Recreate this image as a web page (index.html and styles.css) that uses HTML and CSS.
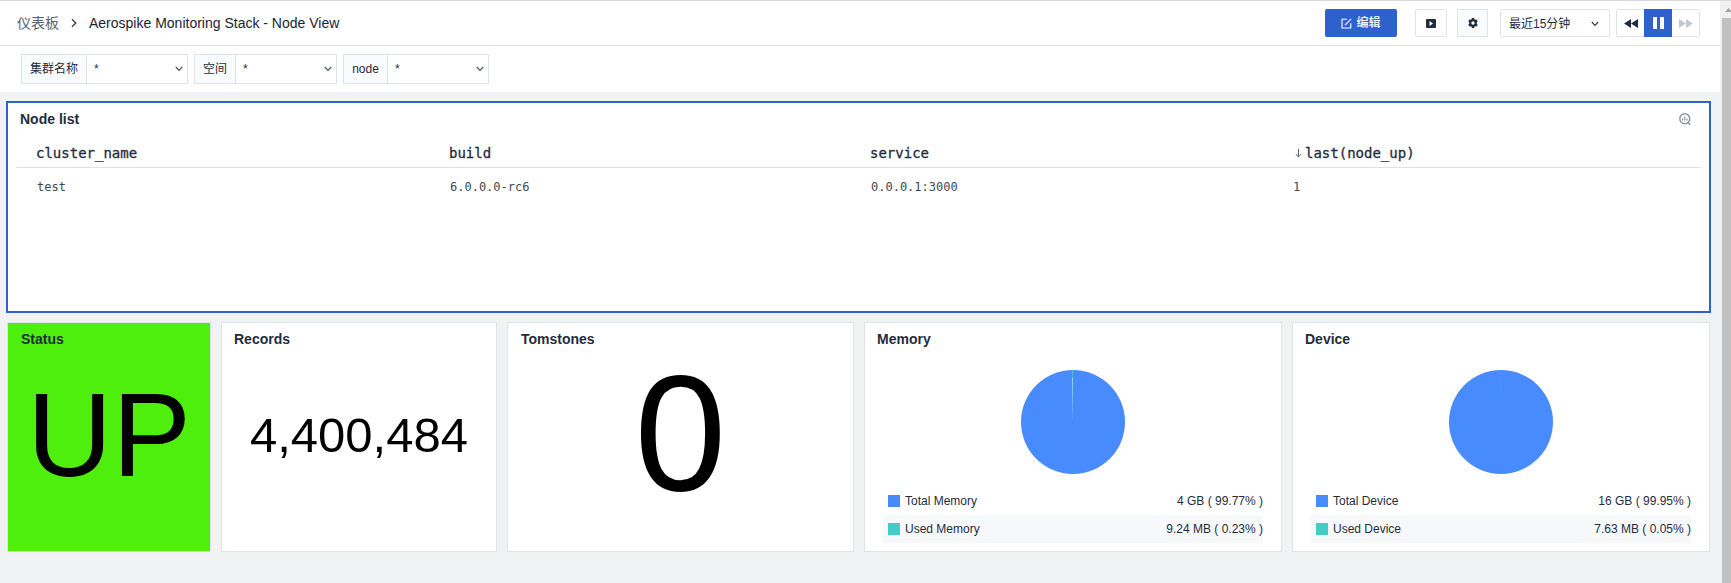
FILE: index.html
```html
<!DOCTYPE html>
<html lang="zh-CN">
<head>
<meta charset="utf-8">
<title>Aerospike Monitoring Stack - Node View</title>
<link rel="stylesheet" href="styles.css">
</head>
<body>
<div class="app">
  <div class="page">
    <header class="topbar">
      <nav class="crumbs">
        <span class="crumb-root">仪表板</span>
        <svg class="crumb-sep" width="8" height="10" viewBox="0 0 8 10"><path d="M2 1.2 5.8 5 2 8.8" fill="none" stroke="#333b47" stroke-width="1.3"/></svg>
        <span class="crumb-page">Aerospike Monitoring Stack - Node View</span>
      </nav>
      <div class="tools">
        <button class="edit">
          <svg width="11" height="11" viewBox="0 0 11 11" fill="none" stroke="#fff" stroke-width="1.1"><path d="M6 1.2H1V10h8.8V5.2M4 7.2 10.2.8"/></svg>
          <span>编辑</span>
        </button>
        <button class="icon-btn play">
          <svg width="10" height="9" viewBox="0 0 10 9"><path fill="#1f2d3d" fill-rule="evenodd" d="M1 0h8a1 1 0 0 1 1 1v7a1 1 0 0 1-1 1H1a1 1 0 0 1-1-1V1a1 1 0 0 1 1-1zM3.5 2v5L7 4.5z"/></svg>
        </button>
        <button class="icon-btn gear">
          <svg width="10" height="10" viewBox="0 0 10 10"><path fill="#1f2d3d" fill-rule="evenodd" d="M3.9 0h2.2l.3 1.3.9.5L8.600 1.400 9.700 3.300 8.800 4.300v1.400l.9 1-1.100 1.900-1.300-.4-.9.5L6.100 10H3.900l-.3-1.300-.9-.5-1.300.4L.3 6.700l.9-1V4.300l-.9-1 1.100-1.900 1.300.4.900-.5zM5 3.300a1.700 1.700 0 1 0 0 3.400 1.700 1.700 0 0 0 0-3.400z"/></svg>
        </button>
        <div class="range"><span>最近15分钟</span>
          <svg width="8" height="6" viewBox="0 0 8 6"><path d="M.8 1 4 4.400 7.200 1" fill="none" stroke="#333b47" stroke-width="1.1"/></svg>
        </div>
        <div class="player">
          <button class="seg"><svg width="14" height="9" viewBox="0 0 14 9"><path fill="#1f2d3d" d="M7 0v9L0 4.500zM14 0v9L7 4.500z"/></svg></button>
          <button class="seg on"><svg width="11" height="12" viewBox="0 0 11 12"><path fill="#fff" d="M0 0h4v12H0zM7 0h4v12H7z"/></svg></button>
          <button class="seg"><svg width="14" height="9" viewBox="0 0 14 9"><path fill="#c3c8d0" d="M0 0v9l7-4.500zM7 0v9l7-4.500z"/></svg></button>
        </div>
      </div>
    </header>

    <div class="filters">
      <div class="filter f-cluster"><label>集群名称</label><div class="pick"><span>*</span><svg width="8" height="6" viewBox="0 0 8 6"><path d="M.8 1 4 4.400 7.200 1" fill="none" stroke="#4a5260" stroke-width="1.2"/></svg></div></div>
      <div class="filter f-space"><label>空间</label><div class="pick"><span>*</span><svg width="8" height="6" viewBox="0 0 8 6"><path d="M.8 1 4 4.400 7.200 1" fill="none" stroke="#4a5260" stroke-width="1.2"/></svg></div></div>
      <div class="filter f-node"><label>node</label><div class="pick"><span>*</span><svg width="8" height="6" viewBox="0 0 8 6"><path d="M.8 1 4 4.400 7.200 1" fill="none" stroke="#4a5260" stroke-width="1.2"/></svg></div></div>
    </div>

    <main class="board">
      <section class="nodes">
        <div class="nodes-head">
          <h2>Node list</h2>
          <svg width="12" height="12" viewBox="0 0 12 12" fill="none" stroke="#8d929b" stroke-width="1.4"><circle cx="5.800" cy="5.800" r="5"/><path d="M8.700 9.200 11.300 11.600"/><path stroke-width="1.200" d="M3.600 5.400v2.200M5.800 3.600v4M8 5.400v2.200"/></svg>
        </div>
        <div class="row head">
          <span>cluster_name</span><span>build</span><span>service</span>
          <span class="sorted"><svg width="7" height="9" viewBox="0 0 7 9"><path d="M3.500 0v7.600M.8 5.200l2.700 2.600 2.700-2.600" fill="none" stroke="#59616d"/></svg>last(node_up)</span>
        </div>
        <div class="row body"><span>test</span><span>6.0.0.0-rc6</span><span>0.0.0.1:3000</span><span>1</span></div>
      </section>

      <div class="cards">
        <section class="card status"><h2>Status</h2><div class="big">UP</div></section>
        <section class="card records"><h2>Records</h2><div class="big">4,400,484</div></section>
        <section class="card tomb"><h2>Tomstones</h2><div class="big">0</div></section>
        <section class="card chart"><h2>Memory</h2>
          <svg class="pie" width="104" height="104" viewBox="0 0 104 104"><circle cx="52" cy="52" r="52" fill="#488bff"/><path d="M52 52 51.100 0H52z" fill="#41cec5"/><path d="M52 52 51 8h1z" fill="#8fd0ea"/></svg>
          <div class="legend">
            <div class="item"><i class="sw blue"></i><span>Total Memory</span><b>4 GB ( 99.77% )</b></div>
            <div class="item alt"><i class="sw teal"></i><span>Used Memory</span><b>9.24 MB ( 0.23% )</b></div>
          </div>
        </section>
        <section class="card chart"><h2>Device</h2>
          <svg class="pie" width="104" height="104" viewBox="0 0 104 104"><circle cx="52" cy="52" r="52" fill="#488bff"/><path d="M52 52 51.800 0H52z" fill="#41cec5"/></svg>
          <div class="legend">
            <div class="item"><i class="sw blue"></i><span>Total Device</span><b>16 GB ( 99.95% )</b></div>
            <div class="item alt"><i class="sw teal"></i><span>Used Device</span><b>7.63 MB ( 0.05% )</b></div>
          </div>
        </section>
      </div>
    </main>
  </div>
  <div class="scrollbar">
    <div class="up"><svg width="7" height="4" viewBox="0 0 7 4"><path d="M0 4 3.500 0 7 4z" fill="#a3a3a3"/></svg></div>
    <div class="thumb"></div>
  </div>
</div>
</body>
</html>
```
FILE: styles.css
```css
* { box-sizing: border-box; }

body {
  margin: 0;
  font: 12px/16px "Liberation Sans", Arial, "Noto Sans CJK SC", sans-serif;
  color: #1f2d3d;
  background: #f0f2f4;
}

button { font: inherit; padding: 0; margin: 0; background: #fff; }
svg { display: block; flex: none; }
h2 { margin: 0; font-size: 14px; line-height: 18px; font-weight: 700; }

.app { display: flex; width: 1731px; height: 583px; overflow: hidden; border-top: 1px solid #dadada; }
.page { width: 1720px; flex: none; }

.topbar {
  display: flex;
  align-items: center;
  justify-content: space-between;
  height: 45px;
  padding: 0 20px 0 17px;
  background: #fff;
  border-bottom: 1px solid #dfe2e6;
}
.crumbs { display: flex; align-items: center; font-size: 14px; line-height: 20px; padding-bottom: 1px; }
.crumb-root { color: #59616d; }
.crumb-sep { margin: 0 11px; }
.crumb-page { color: #1a2433; }

.tools { display: flex; height: 28px; }
.edit {
  display: flex;
  align-items: center;
  justify-content: center;
  gap: 4px;
  width: 72px;
  border: 0;
  border-radius: 2px;
  background: #2e61cc;
  color: #fff;
  font-weight: 500;
}
.icon-btn { display: flex; align-items: center; justify-content: center; border: 1px solid #dfe3ea; border-radius: 2px; }
.play { width: 32px; margin-left: 18px; }
.gear { width: 31px; margin-left: 10px; background: #fafbfd; border-radius: 0; }
.range {
  display: flex;
  align-items: center;
  justify-content: space-between;
  width: 110px;
  margin-left: 12px;
  padding: 1px 10px 0 8px;
  border: 1px solid #dfe3ea;
  border-radius: 2px;
}
.player { display: flex; width: 84px; margin-left: 6px; border: 1px solid #dfe3ea; border-radius: 2px; }
.seg { display: flex; align-items: center; justify-content: center; width: 27px; border: 0; }
.seg.on { width: 28px; margin: -1px 0; background: #2e61cc; }

.filters { display: flex; gap: 6px; height: 46px; padding: 8px 0 0 21px; background: #fff; }
.filter { display: flex; height: 30px; border: 1px solid #dfe3ea; }
.filter label { display: flex; align-items: center; justify-content: center; background: #fafbfd; border-right: 1px solid #dfe3ea; }
.pick { display: flex; flex: 1; align-items: center; justify-content: space-between; padding: 0 4px 0 7px; }
.f-cluster { width: 167px; }
.f-cluster label { width: 65px; }
.f-space { width: 143px; }
.f-space label { width: 41px; }
.f-node { width: 146px; }
.f-node label { width: 44px; }

.board { padding: 9px 9px 0 6px; }
.nodes { height: 212px; border: 2px solid #2e61cc; background: #fff; padding: 7px 8px; }
.nodes-head { display: flex; justify-content: space-between; align-items: center; padding: 0 10px 0 4px; }
.row {
  display: grid;
  grid-template-columns: 421px 421px 422px 1fr;
  font-family: "DejaVu Sans Mono", monospace;
}
.row span { padding-left: 12px; }
.row span:first-child { padding-left: 20px; }
.head {
  height: 40px;
  padding-top: 15px;
  border-bottom: 1px solid #dfe1e4;
  font-size: 14px;
  line-height: 20px;
  -webkit-text-stroke: 0.3px currentColor;
}
.sorted { display: flex; align-items: center; height: 20px; gap: 3px; }
.row .sorted { padding-left: 15px; }
.body { padding: 9px 0 0 1px; font-size: 12px; line-height: 20px; color: #414a55; }

.cards { display: grid; grid-template-columns: 204px 276px 347px 418px 418px; gap: 10px; padding: 9px 0 0 1px; }
.card { display: flex; flex-direction: column; height: 230px; padding: 7px 12px; border: 1px solid #dfe3e8; background: #fff; }
.big { flex: 1; display: flex; align-items: center; justify-content: center; padding-bottom: 22px; color: #000; }
.status { background: #4eee0d; }
.status h2, .tomb h2 { padding-left: 1px; }
.status .big { font-size: 118px; line-height: 118px; }
.records .big { font-size: 49px; line-height: 49px; }
.tomb .big { font-size: 165px; line-height: 160px; padding-bottom: 26px; }

.pie { margin: 22px auto 0; }
.legend { margin: 13px 6px 0; }
.item { display: flex; align-items: center; height: 28px; padding-left: 5px; }
.item b { margin-left: auto; font-weight: 400; }
.alt { background: #f7f8fa; }
.sw { width: 12px; height: 12px; margin-right: 5px; }
.blue { background: #488bff; }
.teal { background: #41cec5; }

.scrollbar { width: 11px; background: #f1f1f1; }
.up { height: 17px; padding: 7px 0 0 5px; overflow: hidden; }
.thumb { height: 565px; margin-left: 2px; background: #c1c1c1; }
```
